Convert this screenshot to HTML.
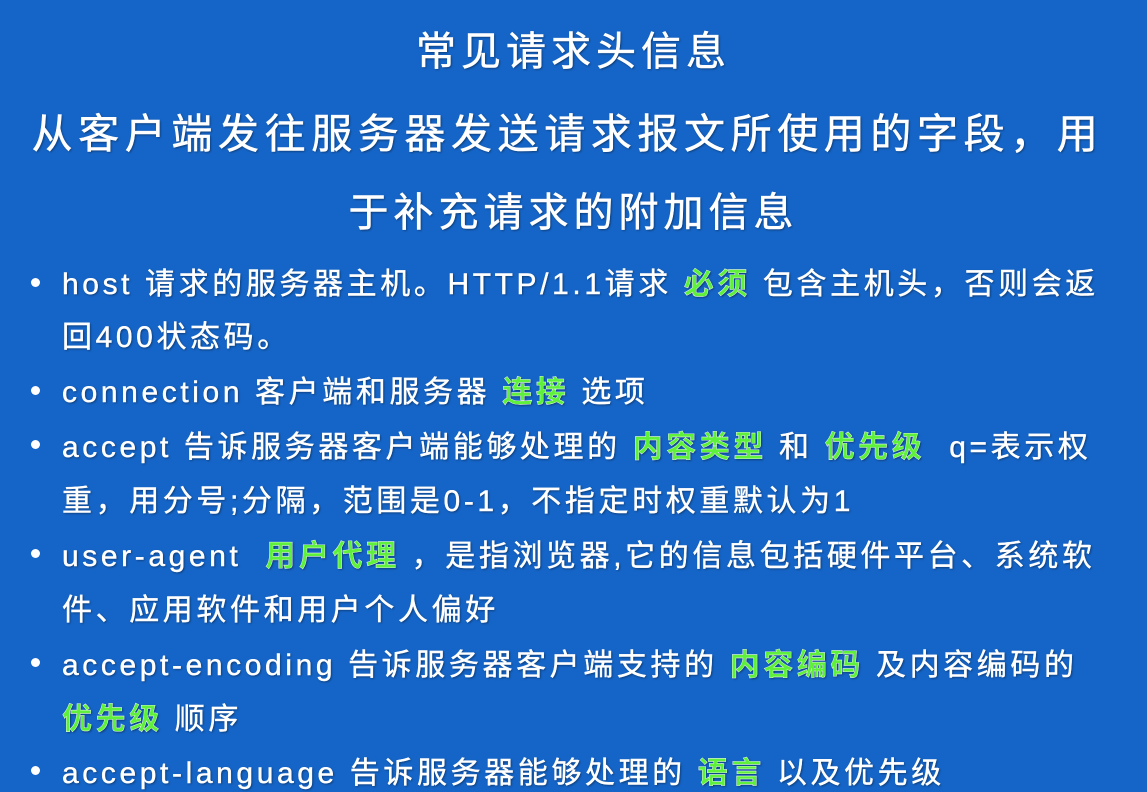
<!DOCTYPE html>
<html><head><meta charset="utf-8"><style>
body{margin:0;width:1147px;height:787px;overflow:hidden;background:#1565c8;font-family:"Liberation Sans","Noto Sans CJK SC",sans-serif;color:#fff;}
.l{position:absolute;white-space:nowrap;text-shadow:1px 1px 2px rgba(0,0,0,.45);}
.c{left:0;width:1147px;text-align:center;font-size:40px;letter-spacing:5px;}
.b{font-size:30px;letter-spacing:3.6px;left:62px;-webkit-text-stroke:0.4px #fff;}
.d{position:absolute;left:31px;width:9px;height:9px;border-radius:50%;background:#fff;}
g,.g{color:#5ef03a;font-weight:bold;}
</style></head><body>
<div class="l c" style="top:19px;-webkit-text-stroke:0.5px #fff">常见请求头信息</div>
<div class="l c" style="top:100px;font-size:41px;letter-spacing:5.6px;left:-6px;-webkit-text-stroke:0.5px #fff">从客户端发往服务器发送请求报文所使用的字段，用</div>
<div class="l c" style="top:180px;-webkit-text-stroke:0.5px #fff">于补充请求的附加信息</div>

<div class="d" style="top:278px"></div>
<div class="l b" style="top:259px">host 请求的服务器主机。HTTP/1.1请求 <g>必须</g> 包含主机头，否则会返</div>
<div class="l b" style="top:312px">回400状态码。</div>
<div class="d" style="top:386px"></div>
<div class="l b" style="top:367px">connection 客户端和服务器 <g>连接</g> 选项</div>
<div class="d" style="top:440px"></div>
<div class="l b" style="top:422px">accept 告诉服务器客户端能够处理的 <g>内容类型</g> 和 <g>优先级</g>&nbsp; q=表示权</div>
<div class="l b" style="top:476px">重，用分号;分隔，范围是0-1，不指定时权重默认为1</div>
<div class="d" style="top:549px"></div>
<div class="l b" style="top:531px">user-agent&nbsp; <g>用户代理</g> ，是指浏览器,它的信息包括硬件平台、系统软</div>
<div class="l b" style="top:585px">件、应用软件和用户个人偏好</div>
<div class="d" style="top:658px"></div>
<div class="l b" style="top:640px">accept-encoding 告诉服务器客户端支持的 <g>内容编码</g> 及内容编码的</div>
<div class="l b" style="top:694px"><g>优先级</g> 顺序</div>
<div class="d" style="top:766px"></div>
<div class="l b" style="top:748px">accept-language 告诉服务器能够处理的 <g>语言</g> 以及优先级</div>
</body></html>
